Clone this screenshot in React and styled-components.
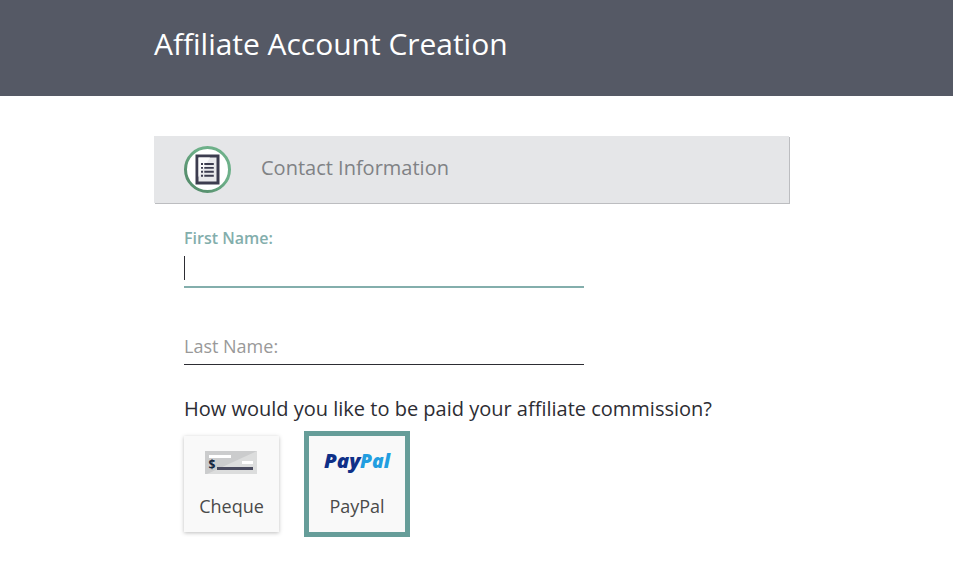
import { useState } from "react";
import styled, { createGlobalStyle } from "styled-components";

const GlobalStyle = createGlobalStyle`
  * {
    box-sizing: border-box;
  }

  body {
    margin: 0;
    background: #fff;
    color: #2d2d33;
    font-family: "Open Sans", "Noto Sans", sans-serif;
  }
`;

// dark bar with the page title
const Header = styled.header`
  height: 96px;
  padding: 23px 0 0 154px;
  background: #555965;
`;

const Title = styled.h1`
  margin: 0;
  font-size: 30px;
  font-weight: 400;
  line-height: 41px;
  letter-spacing: -0.03px;
  color: #fff;
`;

const Content = styled.main`
  width: 635px;
  margin: 40px 0 0 154px;
`;

// section heading
const SectionBar = styled.div`
  display: flex;
  align-items: center;
  gap: 30px;
  height: 67px;
  padding-left: 29px;
  background: #e5e6e8;
  box-shadow: 1px 1px 0 #bcbdc0;
`;

const SectionTitle = styled.h2`
  margin: 0 0 4px;
  font-size: 20px;
  font-weight: 400;
  line-height: 28px;
  color: #808285;
`;

const Form = styled.form`
  padding-left: 30px;
`;

const Field = styled.div`
  display: flex;
  flex-direction: column;
  width: 400px;
  height: ${(props) => (props.$active ? "63px" : "32px")};
  margin-top: ${(props) => (props.$active ? "22px" : "45px")};
  border-bottom: ${(props) =>
    props.$active ? "2px solid #83aeac" : "1px solid #2d2d33"};
`;

const Label = styled.label`
  font-size: ${(props) => (props.$active ? "16px" : "18px")};
  font-weight: ${(props) => (props.$active ? 600 : 400)};
  line-height: 26px;
  color: ${(props) => (props.$active ? "#83aeac" : "#999")};
`;

// text cursor of the active field
const Caret = styled.span`
  width: 1px;
  height: 24px;
  margin-top: 5px;
  background: #2d2d33;
`;

const Question = styled.p`
  margin: 30px 0 0;
  font-size: 20px;
  line-height: 28px;
`;

const Options = styled.div`
  display: flex;
  gap: 25px;
  margin-top: 8px;
`;

const Option = styled.button`
  display: flex;
  flex-direction: column;
  align-items: center;
  width: ${(props) => (props.$selected ? "106px" : "95px")};
  height: ${(props) => (props.$selected ? "106px" : "96px")};
  margin: ${(props) => (props.$selected ? "0" : "5px 0")};
  padding: 15px 0 0;
  border: ${(props) => (props.$selected ? "5px solid #669d99" : "0")};
  background: #f9f9f9;
  box-shadow: ${(props) =>
    props.$selected ? "none" : "0 1px 4px rgba(0, 0, 0, 0.26)"};
  font-family: inherit;
  font-size: 18px;
  line-height: 26px;
  color: #4a4a4a;
  cursor: pointer;
`;

const OptionLabel = styled.span`
  margin-top: 19px;
`;

const ListIcon = () => (
  <svg width="48" height="48" viewBox="0 0 48 48">
    <defs>
      <linearGradient id="ring" x1="0" y1="1" x2="1" y2="0">
        <stop offset="0.2" stopColor="#57906e" />
        <stop offset="0.6" stopColor="#6db089" />
      </linearGradient>
    </defs>
    <circle cx="24.5" cy="23.5" r="22" fill="#fff" stroke="url(#ring)" strokeWidth="3" />
    <rect x="14" y="10" width="21" height="27" fill="#e9e9ec" stroke="#3c3c4f" strokeWidth="3" />
    <path d="M15.5 11.5H27L15.5 31z" fill="#fafafb" />
    <path
      d="M21.3 18h9.5M21.3 21.9h9.5M21.3 25.8h9.5M21.3 29.7h9.5"
      stroke="#3c3c4f"
      strokeWidth="1.9"
    />
    <path
      d="M18 18h2M18 21.9h2M18 25.8h2M18 29.7h2"
      stroke="#3c3c4f"
      strokeWidth="1.9"
    />
  </svg>
);

const ChequeIcon = () => (
  <svg width="53" height="23" viewBox="0 0 53 23">
    <rect width="52" height="23" fill="#cbcccd" />
    <path d="M52 0v23H2z" fill="#dcdddd" />
    <rect x="4" y="4" width="22" height="3" fill="#fff" />
    <rect x="37" y="10" width="11" height="3" fill="#fff" />
    <rect x="12" y="16" width="36" height="3" fill="#4a4b5f" />
    <text x="3.4" y="18" fontFamily="Open Sans, sans-serif" fontSize="12" fontWeight="700" fill="#14263f">
      $
    </text>
  </svg>
);

// wordmark, text may reach past the drawing's edges
const Wordmark = styled.svg`
  overflow: visible;
  font-family: "Open Sans", sans-serif;
  font-size: 19px;
  font-style: italic;
  font-weight: 800;
`;

const PayPalLogo = () => (
  <Wordmark width="68" height="23" viewBox="0 0 68 23">
    <text x="1" y="17" fill="#0f3088" textLength="36.5" lengthAdjust="spacingAndGlyphs">
      Pay
    </text>
    <text x="37" y="17" fill="#229ee0" textLength="30" lengthAdjust="spacingAndGlyphs">
      Pal
    </text>
  </Wordmark>
);

const METHODS = [
  { id: "cheque", label: "Cheque", Icon: ChequeIcon },
  { id: "paypal", label: "PayPal", Icon: PayPalLogo },
];

const App = () => {
  const [method, setMethod] = useState("paypal");

  return (
    <>
      <GlobalStyle />
      <Header>
        <Title>Affiliate Account Creation</Title>
      </Header>

      <Content>
        <SectionBar>
          <ListIcon />
          <SectionTitle>Contact Information</SectionTitle>
        </SectionBar>

        <Form>
          <Field $active>
            <Label $active>First Name:</Label>
            <Caret />
          </Field>
          <Field>
            <Label>Last Name:</Label>
          </Field>

          <Question>How would you like to be paid your affiliate commission?</Question>
          <Options>
            {METHODS.map(({ id, label, Icon }) => (
              <Option
                key={id}
                type="button"
                $selected={method === id}
                onClick={() => setMethod(id)}
              >
                <Icon />
                <OptionLabel>{label}</OptionLabel>
              </Option>
            ))}
          </Options>
        </Form>
      </Content>
    </>
  );
};

export default App;
